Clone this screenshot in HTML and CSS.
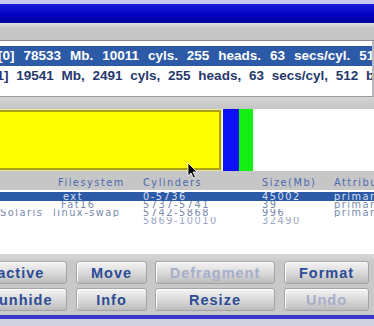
FILE: index.html
```html
<!DOCTYPE html>
<html>
<head>
<meta charset="utf-8">
<link rel="stylesheet" href="styles.css">
</head>
<body>
<div class="screen">
  <div class="topline"></div>
  <div class="titlebar"></div>
  <div class="toolbar"></div>
  <div class="disks">
    <div class="disk selected"><span class="dtext d0">[0] 78533 Mb. 10011 cyls. 255 heads. 63 secs/cyl. 512 bytes/sector</span></div>
    <div class="disk"><span class="dtext d1">[1] 19541 Mb, 2491 cyls, 255 heads, 63 secs/cyl, 512 bytes/sector</span></div>
  </div>
  <div class="spacer"></div>
  <div class="pbar">
    <div class="seg yellow"></div>
    <div class="seg blue"></div>
    <div class="seg green"></div>
    <div class="seg free"></div>
  </div>
  <div class="hdr grid">
    <span></span><span class="c-fs">Filesystem</span><span>Cylinders</span><span>Size(Mb)</span><span>Attributes</span>
  </div>
  <div class="list">
    <div class="row grid sel"><span></span><span class="c-ext">ext</span><span>0-5736</span><span>45002</span><span>primary</span></div>
    <div class="row grid"><span></span><span class="c-fat">Fat16</span><span>5737-5741</span><span>39</span><span>primary</span></div>
    <div class="row grid"><span class="c-sol">Solaris</span><span>linux-swap</span><span>5742-5868</span><span>996</span><span>primary</span></div>
    <div class="row grid dim"><span></span><span></span><span>5869-10010</span><span>32490</span><span></span></div>
  </div>
  <div class="buttons">
    <div class="brow">
      <div class="btn w1">Set active</div>
      <div class="btn w2">Move</div>
      <div class="btn w3 off">Defragment</div>
      <div class="btn w4">Format</div>
    </div>
    <div class="brow">
      <div class="btn w1">Hide/unhide</div>
      <div class="btn w2">Info</div>
      <div class="btn w3">Resize</div>
      <div class="btn w4 off">Undo</div>
    </div>
  </div>
  <div class="bottomline"></div>
  <div class="bottom"></div>
  <svg class="cursor" width="12" height="17" viewBox="0 0 12 17"><path d="M1 1 L1 14 L4 11 L6.5 16 L8.5 15 L6 10 L10 10 Z" fill="#000" stroke="#fff" stroke-width="0.8"/></svg>
</div>
</body>
</html>
```
FILE: styles.css
```css
html, body { margin: 0; padding: 0; }
body { width: 374px; height: 326px; overflow: hidden; background: #c8c8c8; }
.screen { position: relative; width: 374px; height: 326px; overflow: hidden; display: flex; flex-direction: column; }
.topline { height: 4px; background: #c8c8ee; flex: none; }
.titlebar { height: 19px; flex: none; background: linear-gradient(#1a1ad8, #0000c0 60%, #00009a); }
.toolbar { height: 17px; flex: none; background: linear-gradient(#e0e0e0, #c6c6c6 30%); border-bottom: 1px solid #8a8a98; }
.disks { height: 56px; flex: none; background: #fff; padding-top: 5px; box-sizing: border-box; border-bottom: 1px solid #9a9aa6; border-right: 2px solid #b8b8c0; overflow: hidden; }
.disk { height: 19px; line-height: 19px; white-space: nowrap; overflow: hidden; font-family: "Liberation Sans", Arial, sans-serif; font-weight: bold; font-size: 13.5px; word-spacing: 5.2px; color: #26386e; }
.disk.selected { background: #2d5aa6; color: #fff; height: 20px; line-height: 20px; }
.dtext { display: inline-block; }
.d0 { margin-left: -2px; }
.d1 { margin-left: -8px; word-spacing: 4px; }
.spacer { height: 12px; flex: none; background: linear-gradient(#d4d4d4, #c4c4c4); }
.pbar { height: 62px; flex: none; display: flex; background: #fff; }
.seg { height: 100%; box-sizing: border-box; }
.yellow { width: 226px; background: #ffff00; border: 1px solid #e6e6a0; box-shadow: inset 0 0 0 2px #aaa014; margin-left: -4px; }
.blue { width: 16px; background: #0c10f4; margin-left: 1px; }
.green { width: 14px; background: #14f014; }
.free { flex: 1; background: #fff; }
.grid { display: grid; grid-template-columns: 53px 90px 119px 72px 1fr; white-space: nowrap; font-family: "DejaVu Sans", sans-serif; font-size: 9.8px; letter-spacing: 1.5px; overflow: hidden; }
.hdr { height: 19px; line-height: 23px; background: #c6c6c6; color: #4d6aae; flex: none; }
.c-fs { padding-left: 5px; }
.c-ext { padding-left: 10px; }
.c-fat { padding-left: 8px; }
.c-sol { margin-left: 0; }
.list { height: 64px; flex: none; background: #fff; padding-top: 2px; box-sizing: border-box; }
.row { height: 8px; line-height: 8px; color: #7888ac; }
.row.sel { background: #2d5aa6; color: #d8e0f4; height: 9px; line-height: 9px; }
.row.dim { color: #9aa8c6; }
.buttons { height: 61px; flex: none; background: linear-gradient(#d8d8d8, #c8c8c8 15%); padding-top: 7px; box-sizing: border-box; display: flex; flex-direction: column; gap: 4px; }
.brow { display: flex; gap: 8px; margin-left: -56px; }
.btn { height: 23px; box-sizing: border-box; border: 1px solid #a4a4a8; border-radius: 3px; background: linear-gradient(#f4f4f4, #d8d8d8 55%, #bcbcbc); box-shadow: inset 1px 1px 0 #fff; display: flex; align-items: center; justify-content: center; font-family: "Liberation Sans", Arial, sans-serif; font-weight: bold; font-size: 14.5px; letter-spacing: 1px; color: #2c4c96; white-space: nowrap; }
.btn.off { color: #a6aecb; }
.w1 { width: 123px; }
.w2 { width: 71px; margin-left: 1px; }
.w3 { width: 120px; }
.w4 { width: 85px; margin-left: 1px; }
.bottomline { height: 4px; flex: none; background: #3838c8; }
.bottom { flex: 1; background: #d0d0e0; }
.cursor { position: absolute; left: 187px; top: 162px; }
```
